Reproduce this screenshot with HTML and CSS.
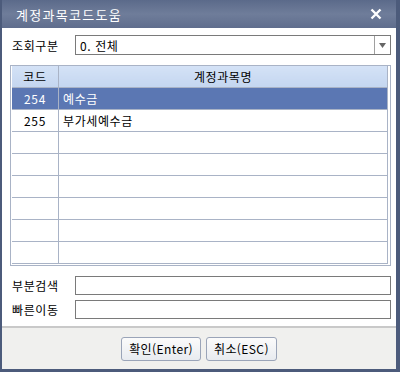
FILE: index.html
```html
<!DOCTYPE html>
<html lang="ko">
<head>
    <meta charset="UTF-8">
    <title>계정과목코드도움</title>
    <link rel="stylesheet" href="styles.css">
</head>
<body>
    <div class="dialog">
        <div class="titlebar">
            <span class="title">계정과목코드도움</span>
            <svg class="close" width="12" height="12" viewBox="0 0 12 12">
                <path d="M1.5 1.5 L10.5 10.5 M10.5 1.5 L1.5 10.5" stroke="#fff" stroke-width="2.4" />
            </svg>
        </div>

        <div class="content">
            <!-- 조회구분 -->
            <div class="field-row top">
                <label>조회구분</label>
                <div class="select">
                    <span class="select-value">0. 전체</span>
                    <span class="select-btn">
                        <svg width="7" height="5" viewBox="0 0 7 5"><path d="M0 0 H7 L3.5 5 Z" fill="#666" /></svg>
                    </span>
                </div>
            </div>

            <!-- 목록 -->
            <div class="grid-wrap">
                <table class="grid">
                    <thead>
                        <tr><th class="col-code">코드</th><th>계정과목명</th></tr>
                    </thead>
                    <tbody>
                        <tr class="selected"><td class="col-code">254</td><td>예수금</td></tr>
                        <tr><td class="col-code">255</td><td>부가세예수금</td></tr>
                        <tr><td class="col-code"></td><td></td></tr>
                        <tr><td class="col-code"></td><td></td></tr>
                        <tr><td class="col-code"></td><td></td></tr>
                        <tr><td class="col-code"></td><td></td></tr>
                        <tr><td class="col-code"></td><td></td></tr>
                        <tr><td class="col-code"></td><td></td></tr>
                    </tbody>
                </table>
            </div>

            <div class="field-row search">
                <label>부분검색</label>
                <input type="text" class="text-input">
            </div>
            <div class="field-row">
                <label>빠른이동</label>
                <input type="text" class="text-input">
            </div>
        </div>

        <div class="footer">
            <button type="button">확인(Enter)</button>
            <button type="button">취소(ESC)</button>
        </div>
    </div>
</body>
</html>
```

FILE: styles.css
```css
body {
    margin: 0;
    padding: 0;
    font-family: "Noto Sans CJK KR", "Liberation Sans", sans-serif;
    font-size: 12px;
    letter-spacing: 0.6px;
    color: #000;
    background: #4a5a78;
}

.dialog {
    width: 400px;
    height: 372px;
    box-sizing: border-box;
    border-left: 2px solid #4c5b7b;
    border-right: 4px solid #4c5b7b;
    border-bottom: 3px solid #4c5b7b;
    background: #fff;
    display: flex;
    flex-direction: column;
}

.titlebar {
    height: 28px;
    flex: none;
    display: flex;
    align-items: center;
    justify-content: space-between;
    padding: 0 14px 0 14px;
    background: linear-gradient(#5b6a8a, #6f7d9a 50%, #5f6d8d);
    color: #fff;
}

.title {
    font-size: 13px;
    letter-spacing: 1.3px;
}

.close {
    margin-top: -1px;
}

.content {
    flex: 1;
    padding: 7px 5px 0 8px;
}

.field-row {
    display: flex;
    align-items: center;
    height: 18px;
    margin-bottom: 6px;
}

.field-row.top {
    height: 20px;
    margin-bottom: 10px;
}

.field-row.search {
    margin-top: 10px;
}

.field-row label {
    box-sizing: border-box;
    width: 65px;
    padding-left: 2px;
    flex: none;
}

.select {
    flex: 1;
    height: 20px;
    box-sizing: border-box;
    border: 1px solid #7a7a7a;
    display: flex;
    align-items: center;
}

.select-value {
    flex: 1;
    padding-left: 4px;
}

.select-btn {
    width: 15px;
    height: 18px;
    border-left: 1px solid #a0a0a0;
    display: flex;
    align-items: center;
    justify-content: center;
}

.grid-wrap {
    border: 1px solid #a9b3c6;
    padding: 0 2px 1px 1px;
}

.grid {
    width: 100%;
    border-collapse: collapse;
    table-layout: fixed;
}

.grid th,
.grid td {
    height: 21px;
    padding: 0 4px;
    border: 1px solid #a9b3c6;
    font-weight: normal;
    white-space: nowrap;
}

.grid tr:first-child th,
.grid thead + tbody tr:first-child td {
    border-top: none;
}

.grid th:first-child,
.grid td:first-child {
    border-left: none;
}

.grid th {
    background: linear-gradient(#d4e2f6, #c4d6f0);
    text-align: center;
}

.grid .col-code {
    width: 38px;
    text-align: center;
}

.grid tr.selected td {
    background: #5b77b3;
    color: #fff;
}

.text-input {
    flex: 1;
    min-width: 0;
    height: 19px;
    box-sizing: border-box;
    border: 1px solid #7a7a7a;
    margin: 0;
    padding: 0 4px;
    font: inherit;
}

.footer {
    flex: none;
    height: 41px;
    border-top: 2px solid #c9c9c9;
    background: #f0f0ee;
    display: flex;
    justify-content: center;
    align-items: center;
    gap: 5px;
}

.footer button {
    height: 24px;
    padding: 0 7px;
    font-family: inherit;
    font-size: 12px;
    letter-spacing: 0.4px;
    color: #000;
    background: linear-gradient(#fbfbfb, #e8ebf0);
    border: 1px solid #9aa4b8;
    border-radius: 3px;
}
```
